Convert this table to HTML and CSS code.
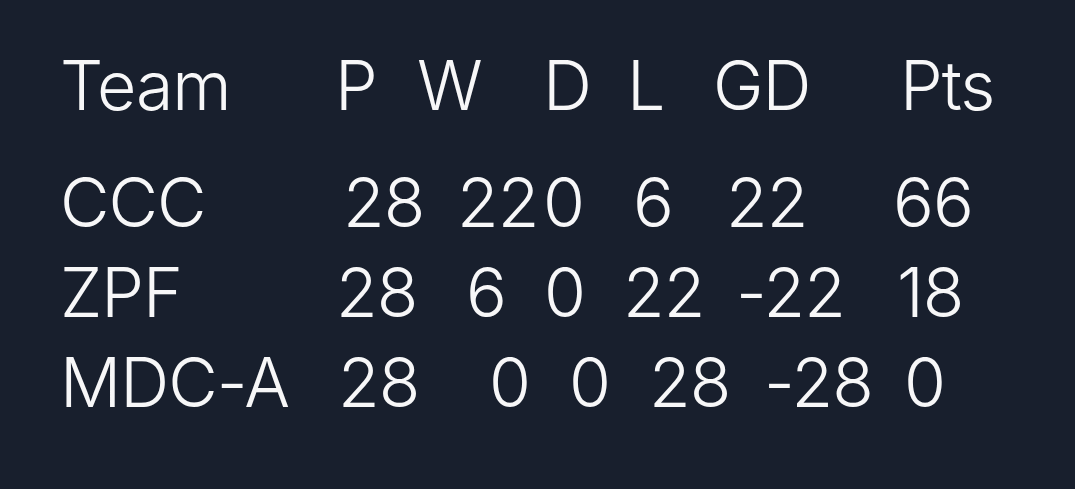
FILE: index.html
```html
<!DOCTYPE html>
<html lang="en">
<head>
<meta charset="utf-8">
<title>Standings</title>
<link rel="stylesheet" href="styles.css">
</head>
<body>
<main class="standings">
  <div class="row row-head">
    <span>Team</span><span>P</span><span>W</span><span>D</span><span>L</span><span>GD</span><span>Pts</span>
  </div>
  <div class="row row-ccc">
    <span>CCC</span><span>28</span><span>22</span><span>0</span><span>6</span><span>22</span><span>66</span>
  </div>
  <div class="row row-zpf">
    <span>ZPF</span><span>28</span><span>6</span><span>0</span><span>22</span><span>-22</span><span>18</span>
  </div>
  <div class="row row-mdc">
    <span>MDC-A</span><span>28</span><span>0</span><span>0</span><span>28</span><span>-28</span><span>0</span>
  </div>
</main>
</body>
</html>
```
FILE: styles.css
```css
html, body {
  margin: 0;
  height: 100%;
  background: #181f2d;
}

.standings {
  padding: 40px 0 0 60px;
  font-family: Inter, "Noto Sans", sans-serif;
  font-weight: 350;
  font-size: 68px;
  line-height: 90px;
  letter-spacing: -1px;
  color: #f7f7f8;
}

.row {
  display: grid;
  white-space: nowrap;
}

.row-head {
  margin-bottom: 27px;
  grid-template-columns: 275px 82px 126px 84px 86px 187px auto;
}

.row-ccc {
  grid-template-columns: 283px 114px 86px 90px 93px 167px auto;
}

.row-zpf {
  grid-template-columns: 276px 130px 78px 79px 113px 161px auto;
}

.row-mdc {
  grid-template-columns: 278px 151px 80px 80px 115px 140px auto;
}
```
